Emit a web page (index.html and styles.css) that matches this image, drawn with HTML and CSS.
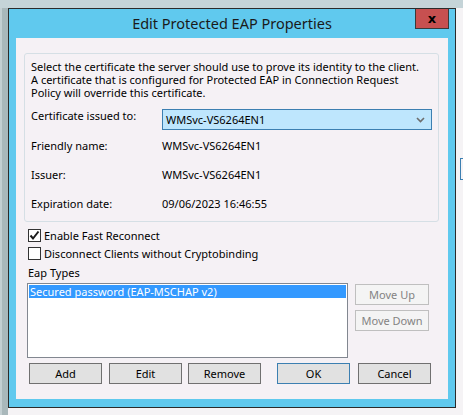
FILE: index.html
```html
<!DOCTYPE html>
<html lang="en">
<head>
    <meta charset="UTF-8">
    <title>Edit Protected EAP Properties</title>
    <link rel="stylesheet" href="styles.css">
</head>
<body>

    <div class="dialog">
        <div class="titlebar">
            <span class="title">Edit Protected EAP Properties</span>
            <button class="close-btn">x</button>
        </div>

        <div class="content">
            <div class="group">
                <p class="intro">Select the certificate the server should use to prove its identity to the client.<br>
                A certificate that is configured for Protected EAP in Connection Request<br>
                Policy will override this certificate.</p>

                <div class="cert-row">
                    <span class="label">Certificate issued to:</span>
                    <div class="combo">
                        <span>WMSvc-VS6264EN1</span>
                        <svg class="chevron" width="9" height="6" viewBox="0 0 9 6">
                            <path d="M1 1 L4.5 4.5 L8 1" fill="none" stroke="#6d6d6d" stroke-width="1.6"/>
                        </svg>
                    </div>
                </div>

                <div class="info-row first">
                    <span class="label">Friendly name:</span>
                    <span>WMSvc-VS6264EN1</span>
                </div>
                <div class="info-row">
                    <span class="label">Issuer:</span>
                    <span>WMSvc-VS6264EN1</span>
                </div>
                <div class="info-row">
                    <span class="label">Expiration date:</span>
                    <span>09/06/2023 16:46:55</span>
                </div>
            </div>

            <label class="check first">
                <span class="box">
                    <svg width="11" height="11" viewBox="0 0 11 11">
                        <path d="M1.5 5.5 L4 8.5 L9.5 1.5" fill="none" stroke="#1a1a1a" stroke-width="2"/>
                    </svg>
                </span>
                Enable Fast Reconnect
            </label>
            <label class="check">
                <span class="box"></span>
                Disconnect Clients without Cryptobinding
            </label>

            <div class="eap-label">Eap Types</div>

            <div class="eap-row">
                <div class="listbox">
                    <div class="item selected">Secured password (EAP-MSCHAP v2)</div>
                </div>
                <div class="side-buttons">
                    <button class="btn disabled">Move Up</button>
                    <button class="btn disabled">Move Down</button>
                </div>
            </div>

            <div class="button-row">
                <button class="btn">Add</button>
                <button class="btn edit">Edit</button>
                <button class="btn remove">Remove</button>
                <button class="btn ok">OK</button>
                <button class="btn cancel">Cancel</button>
            </div>
        </div>
    </div>

    <div class="behind"></div>

</body>
</html>
```

FILE: styles.css
```css
html, body {
    margin: 0;
    height: 100%;
}
body {
    position: relative;
    font-family: "Noto Sans", "Open Sans", sans-serif;
    font-size: 11px;
    color: #000;
    background:
        linear-gradient(#c5d4d8, #c5d4d8) top left / 100% 8px no-repeat,
        linear-gradient(to right, #c3cfd2 2px, #a9b8bb 2px, #a9b8bb 8px, transparent 8px) left / 8px 100% no-repeat,
        #f5f3f5;
    padding: 8px 7px 0 8px;
    box-sizing: border-box;
}
/* edge of a window that sits behind the dialog */
.behind {
    position: absolute;
    left: 460px;
    top: 158px;
    width: 10px;
    height: 20px;
    border: 1px solid #3c7fb1;
    background: #f5f3f5;
}
.dialog {
    width: 448px;
    height: 400px;
    box-sizing: border-box;
    border: 1px solid #2b2b2b;
    background: #60c9ee;
    padding: 0 7px 8px 7px;
    display: flex;
    flex-direction: column;
}
.titlebar {
    height: 29px;
    display: grid;
    grid-template-columns: 1fr auto 1fr;
    align-items: start;
}
.title {
    grid-column: 2;
    font-size: 14.5px;
    line-height: 29px;
    color: #1a1a1a;
}
.close-btn {
    grid-column: 3;
    justify-self: end;
    width: 34px;
    height: 20px;
    margin-right: -1px;
    background: #c75050;
    border: 1px solid #3a3a3a;
    border-top: none;
    font-family: "DejaVu Sans", sans-serif;
    font-size: 13px;
    font-weight: bold;
    line-height: 14px;
    color: #000;
    padding: 0;
}
.content {
    flex: 1;
    background: #f5f1f5;
    padding: 15px 9px 0 8px;
}
.group {
    height: 169px;
    box-sizing: border-box;
    border: 1px solid #d5dfe5;
    border-radius: 3px;
    padding: 6px 6px 0 6px;
}
.intro {
    margin: 0;
    line-height: 13px;
}
.cert-row {
    display: flex;
    align-items: flex-start;
    margin-top: 10px;
}
.label {
    width: 131px;
    flex-shrink: 0;
    line-height: 13px;
}
.combo {
    width: 271px;
    height: 21px;
    box-sizing: border-box;
    border: 1px solid #3c7fb1;
    background: #bee6fd;
    display: flex;
    align-items: center;
    justify-content: space-between;
    padding: 0 6px 0 3px;
}
.chevron {
    margin-top: 1px;
}
.info-row {
    display: flex;
    line-height: 13px;
    margin-top: 16px;
}
.info-row.first {
    margin-top: 9px;
}
.check {
    display: flex;
    align-items: center;
    height: 18px;
    margin-left: 4px;
}
.check.first {
    margin-top: 4px;
}
.box {
    width: 13px;
    height: 13px;
    box-sizing: border-box;
    border: 1px solid #333;
    background: #fff;
    margin-right: 3px;
    display: flex;
    align-items: center;
    justify-content: center;
}
.eap-label {
    margin-left: 4px;
    margin-top: 2px;
    line-height: 18px;
}
.eap-row {
    display: flex;
    align-items: flex-start;
    margin-top: 1px;
    margin-left: 3px;
}
.listbox {
    width: 321px;
    height: 75px;
    box-sizing: border-box;
    border: 1px solid #828790;
    background: #fff;
    padding: 1px;
}
.item {
    height: 13px;
    line-height: 13px;
    padding-left: 1px;
}
.selected {
    background: #3399ff;
    color: #fff;
}
.side-buttons {
    display: flex;
    flex-direction: column;
    gap: 5px;
    margin-left: 7px;
    margin-top: 1px;
}
.btn {
    width: 74px;
    height: 21px;
    box-sizing: border-box;
    border: 1px solid #707070;
    background: #e1e1e1;
    font-family: inherit;
    font-size: 11px;
    color: #000;
    padding: 0;
}
.btn.disabled {
    border-color: #bfbfbf;
    background: #f4f4f4;
    color: #838383;
}
.button-row {
    display: flex;
    margin-top: 5px;
    margin-left: 5px;
}
.button-row .btn {
    width: 73px;
}
.edit {
    margin-left: 7px;
}
.remove {
    margin-left: 6px;
}
.ok {
    margin-left: 16px;
    border-color: #3c7fb1 !important;
}
.cancel {
    margin-left: 8px;
}
```
